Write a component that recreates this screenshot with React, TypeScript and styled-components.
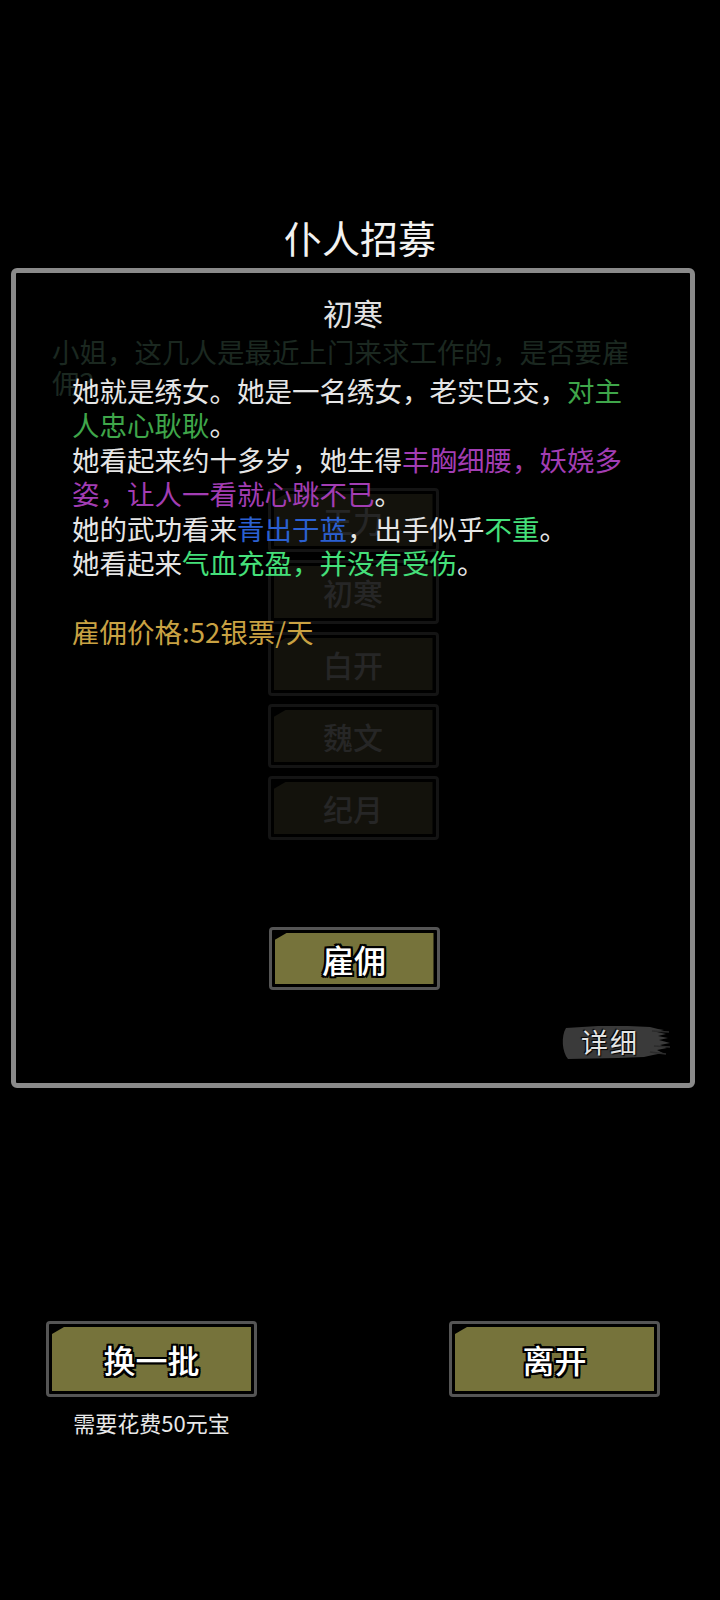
import styled, { createGlobalStyle } from "styled-components"

const GlobalStyle = createGlobalStyle`
  html, body {
    margin: 0;
    padding: 0;
    background: #000;
  }
  body {
    font-family: "Noto Sans CJK SC", "Noto Sans", sans-serif;
  }
`

const Page = styled.div`
  width: 720px;
  height: 1600px;
  background: #000;
  display: flex;
  flex-direction: column;
`

const Title = styled.h1`
  margin: 214px 0 8px;
  text-align: center;
  font-size: 38px;
  font-weight: 400;
  line-height: 46px;
  color: #f2f2f2;
`

const Panel = styled.div`
  position: relative;
  box-sizing: border-box;
  width: 684px;
  height: 820px;
  margin-left: 11px;
  border: 5px solid #8a8a8a;
  border-radius: 6px;
  padding-top: 63px;
`

const FadedText = styled.p`
  margin: 0 0 0 36px;
  width: 600px;
  font-size: 27.5px;
  line-height: 31px;
  color: #1b2820;
`

const GhostList = styled.div`
  margin-top: 90px;
  display: flex;
  flex-direction: column;
  align-items: center;
  gap: 8px;
`

const ButtonFrame = styled.div<{ $w: number; $h: number; $dim?: boolean }>`
  box-sizing: border-box;
  width: ${p => p.$w}px;
  height: ${p => p.$h}px;
  padding: 3px;
  border: 3px solid ${p => (p.$dim ? "#141414" : "#555555")};
  border-radius: 4px;
  background: #000;
  flex-shrink: 0;
`

const ButtonFace = styled.div<{ $size: number; $dim?: boolean }>`
  height: 100%;
  display: flex;
  align-items: center;
  justify-content: center;
  background: ${p => (p.$dim ? "#13120c" : "#76733b")};
  clip-path: polygon(12px 0, 100% 0, 100% 100%, 0 100%, 0 7px);
  font-size: ${p => p.$size}px;
  font-weight: 500;
  color: ${p => (p.$dim ? "#262626" : "#ffffff")};
  text-shadow: ${p =>
    p.$dim
      ? "none"
      : "-2px -2px 0 #000, 2px -2px 0 #000, -2px 2px 0 #000, 2px 2px 0 #000, 0 2px 0 #000, 0 -2px 0 #000, 2px 0 0 #000, -2px 0 0 #000"};
`

const Overlay = styled.div`
  position: absolute;
  inset: 0;
  display: flex;
  flex-direction: column;
  padding: 21px 0 93px;
  box-sizing: border-box;
`

const Name = styled.div`
  text-align: center;
  font-size: 30px;
  line-height: 36px;
  color: #e2e2e2;
`

const Description = styled.div`
  margin: 43px 0 0 56px;
  width: 570px;
  font-size: 27.5px;
  line-height: 34.4px;
  color: #e6e6e6;
`

const Line = styled.p`
  margin: 0;
`

const Gap = styled.div`
  height: 34.4px;
`

const Hl = styled.span<{ $c: string }>`
  color: ${p => p.$c};
`

const Price = styled.p`
  margin: 0;
  color: #c9a243;
`

const HireWrap = styled.div`
  margin-top: auto;
  align-self: center;
  margin-left: 2px;
`

const DetailTag = styled.div`
  position: absolute;
  right: 20px;
  bottom: 21px;
  width: 112px;
  height: 40px;
  display: flex;
  align-items: center;
  justify-content: center;
  padding-right: 8px;
  box-sizing: border-box;
`

const Brush = styled.svg`
  position: absolute;
  inset: 0;
`

const TagText = styled.span`
  position: relative;
  font-size: 27px;
  line-height: 40px;
  color: #e4e4e4;
  letter-spacing: 2px;
  text-shadow: 1px 1px 1px #000, -1px -1px 1px #000;
`

const BottomRow = styled.div`
  margin-top: 233px;
  box-sizing: border-box;
  width: 720px;
  padding: 0 60px 0 46px;
  display: flex;
  justify-content: space-between;
  align-items: flex-start;
`

const ButtonColumn = styled.div`
  display: flex;
  flex-direction: column;
  align-items: center;
`

const Caption = styled.div`
  margin-top: 11px;
  font-size: 22px;
  line-height: 28px;
  color: #e8e8e8;
`

function GameButton({ label, w, h, size, dim }: { label: string; w: number; h: number; size: number; dim?: boolean }) {
  return (
    <ButtonFrame $w={w} $h={h} $dim={dim}>
      <ButtonFace $size={size} $dim={dim}>{label}</ButtonFace>
    </ButtonFrame>
  )
}

const candidates = ["王力", "初寒", "白开", "魏文", "纪月"]

export default function App() {
  return (
    <Page>
      <GlobalStyle />
      <Title>仆人招募</Title>
      <Panel>
        <FadedText>小姐，这几人是最近上门来求工作的，是否要雇佣？</FadedText>
        <GhostList>
          {candidates.map(n => (
            <GameButton key={n} label={n} w={171} h={64} size={30} dim />
          ))}
        </GhostList>

        <Overlay>
          <Name>初寒</Name>
          <Description>
            <Line>
              她就是绣女。她是一名绣女，老实巴交，<Hl $c="#3fa64a">对主人忠心耿耿</Hl>。
            </Line>
            <Line>
              她看起来约十多岁，她生得<Hl $c="#a23db3">丰胸细腰，妖娆多姿，让人一看就心跳不已</Hl>。
            </Line>
            <Line>
              她的武功看来<Hl $c="#2b60d2">青出于蓝</Hl>，出手似乎<Hl $c="#45e07a">不重</Hl>。
            </Line>
            <Line>
              她看起来<Hl $c="#45e07a">气血充盈，并没有受伤</Hl>。
            </Line>
            <Gap />
            <Price>雇佣价格:52银票/天</Price>
          </Description>
          <HireWrap>
            <GameButton label="雇佣" w={171} h={63} size={32} />
          </HireWrap>
        </Overlay>

        {/* ink brush stroke behind the 详细 label */}
        <DetailTag>
          <Brush viewBox="0 0 112 40" width="112" height="40">
            <path
              d="M8 6 L40 4 L70 4 L92 5 L100 7 L106 8 L99 10 L108 12 L100 14 L110 16 L101 18 L112 21 L102 23 L109 26 L99 28 L105 31 L95 33 L86 35 L60 36 L10 37 C4 30 3 14 8 6 Z"
              fill="#3a3a3a"
            />
            <path d="M94 9 L111 10 M96 24 L112 25 M92 30 L108 32" stroke="#2c2c2c" strokeWidth="1.5" />
          </Brush>
          <TagText>详细</TagText>
        </DetailTag>
      </Panel>

      <BottomRow>
        <ButtonColumn>
          <GameButton label="换一批" w={211} h={76} size={32} />
          <Caption>需要花费50元宝</Caption>
        </ButtonColumn>
        <GameButton label="离开" w={211} h={76} size={32} />
      </BottomRow>
    </Page>
  )
}
